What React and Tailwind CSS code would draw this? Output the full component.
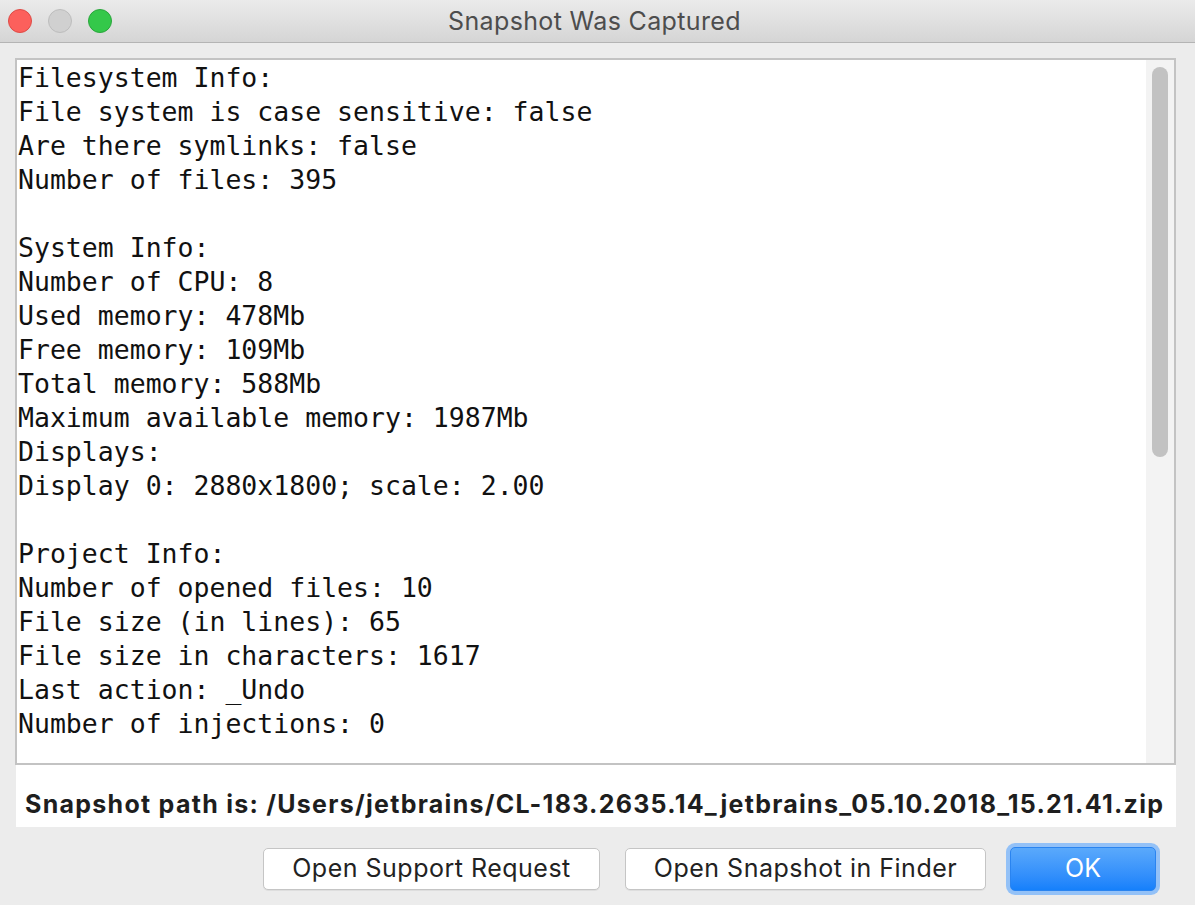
import React from 'react';

const lines = [
    'Filesystem Info:',
    'File system is case sensitive: false',
    'Are there symlinks: false',
    'Number of files: 395',
    '',
    'System Info:',
    'Number of CPU: 8',
    'Used memory: 478Mb',
    'Free memory: 109Mb',
    'Total memory: 588Mb',
    'Maximum available memory: 1987Mb',
    'Displays:',
    'Display 0: 2880x1800; scale: 2.00',
    '',
    'Project Info:',
    'Number of opened files: 10',
    'File size (in lines): 65',
    'File size in characters: 1617',
    'Last action: _Undo',
    'Number of injections: 0',
];

const sans = { fontFamily: 'Inter, "Liberation Sans", Arial, sans-serif' };

const App = () => {
    return (
        <div className="w-[1195px] h-[905px] bg-[#ececec] flex flex-col overflow-hidden" style={sans}>
            {/* title bar */}
            <div className="relative h-[43px] shrink-0 bg-gradient-to-b from-[#ebebeb] to-[#d5d5d5] border-b border-[#b4b4b4] flex items-center justify-center">
                <div className="absolute left-[8px] top-[9px] flex gap-[16px]">
                    <div className="w-[24px] h-[24px] rounded-full bg-[#fc605c] border border-[#de4b46]" />
                    <div className="w-[24px] h-[24px] rounded-full bg-[#d0d0d0] border border-[#bdbdbd]" />
                    <div className="w-[24px] h-[24px] rounded-full bg-[#34c84a] border border-[#2aa63c]" />
                </div>
                <span className="text-[25px] tracking-[0.35px] text-[#4d4d4d] pr-[6px] pt-[2px]">Snapshot Was Captured</span>
            </div>

            <div className="flex flex-col pl-[15px] pr-[19px] pt-[15px]">
                {/* text area */}
                <div className="h-[707px] border-2 border-[#c3c3c3] bg-white flex">
                    <div
                        className="flex-1 pl-[1px] pt-[1px] text-[26.5px] leading-[34px] text-[#111] whitespace-pre"
                        style={{ fontFamily: '"DejaVu Sans Mono", monospace' }}
                    >
                        {lines.map((l, i) => (
                            <div key={i} className="h-[34px]">{l}</div>
                        ))}
                    </div>
                    <div className="w-[28px] bg-[#f3f3f3] flex justify-center pt-[7px]">
                        <div className="w-[16px] h-[390px] rounded-full bg-[#c2c2c2]" />
                    </div>
                </div>

                {/* snapshot path */}
                <div className="h-[62px] bg-white ml-[1px] flex items-center pl-[9px] pt-[18px]">
                    <span className="text-[25px] tracking-[1.27px] font-bold text-[#1e1e1e]">
                        Snapshot path is: /Users/jetbrains/CL-183.2635.14_jetbrains_05.10.2018_15.21.41.zip
                    </span>
                </div>

                {/* buttons */}
                <div className="flex items-center pt-[16px] pl-[248px] gap-[25px]">
                    <button className="w-[337px] h-[42px] bg-white border border-[#c5c5c5] rounded-[5px] text-[25px] tracking-[0.5px] text-[#222] shadow-[0_1px_0_rgba(0,0,0,0.06)]">
                        Open Support Request
                    </button>
                    <button className="w-[361px] h-[42px] bg-white border border-[#c5c5c5] rounded-[5px] text-[25px] tracking-[0.5px] text-[#222] shadow-[0_1px_0_rgba(0,0,0,0.06)]">
                        Open Snapshot in Finder
                    </button>
                    <div className="ml-[-5px] p-[4px] rounded-[9px] bg-[#93c1f7]">
                        <button className="w-[146px] h-[44px] rounded-[5px] bg-gradient-to-b from-[#5aa9fb] to-[#1580fb] border border-[#2a84f0] text-[25px] text-white">
                            OK
                        </button>
                    </div>
                </div>
            </div>
        </div>
    );
};

export default App;
